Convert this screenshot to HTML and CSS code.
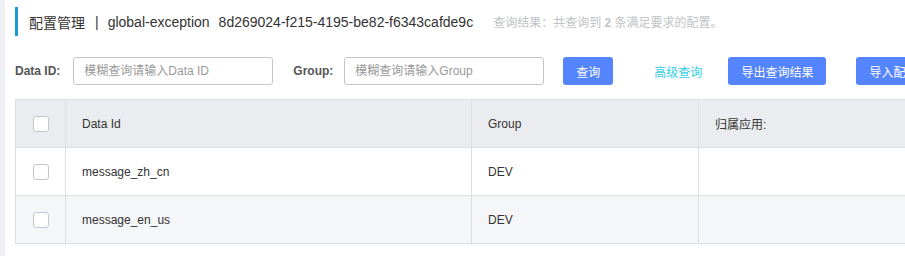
FILE: index.html
```html
<!DOCTYPE html>
<html lang="zh-CN">
<head>
  <meta charset="UTF-8" />
  <meta name="viewport" content="width=device-width, initial-scale=1.0"/>
  <title>配置管理</title>
  <link rel="stylesheet" href="styles.css">
</head>
<body>
  <div class="layout">
    <aside class="rail"></aside>
    <main class="page">
      <div class="page-title">
        <span class="title-main">配置管理</span>
        <span class="title-sep">|</span>
        <span class="title-main">global-exception</span>
        <span class="title-ns">8d269024-f215-4195-be82-f6343cafde9c</span>
        <span class="title-hint">查询结果：共查询到 <b>2</b> 条满足要求的配置。</span>
      </div>

      <form class="search-bar">
        <label class="field-label" for="data-id">Data ID:</label>
        <input class="field-input" id="data-id" type="text" placeholder="模糊查询请输入Data ID">
        <label class="field-label" for="group">Group:</label>
        <input class="field-input" id="group" type="text" placeholder="模糊查询请输入Group">
        <button type="button" class="btn btn-primary btn-query">查询</button>
        <button type="button" class="btn btn-text">高级查询</button>
        <button type="button" class="btn btn-primary">导出查询结果</button>
        <button type="button" class="btn btn-primary">导入配置</button>
      </form>

      <table class="config-table">
        <colgroup>
          <col class="col-check">
          <col class="col-id">
          <col class="col-group">
          <col class="col-app">
        </colgroup>
        <thead>
          <tr>
            <th><span class="checkbox"></span></th>
            <th>Data Id</th>
            <th>Group</th>
            <th>归属应用:</th>
          </tr>
        </thead>
        <tbody>
          <tr>
            <td><span class="checkbox"></span></td>
            <td>message_zh_cn</td>
            <td>DEV</td>
            <td></td>
          </tr>
          <tr class="row-alt">
            <td><span class="checkbox"></span></td>
            <td>message_en_us</td>
            <td>DEV</td>
            <td></td>
          </tr>
        </tbody>
      </table>
    </main>
  </div>
</body>
</html>
```

FILE: styles.css
```css
body {
  margin: 0;
  font-family: "Liberation Sans", "Noto Sans CJK SC", sans-serif;
  color: #333;
  background: #fff;
  overflow: hidden;
}

.layout {
  display: flex;
  min-height: 256px;
  width: 1200px;
}

.rail {
  width: 5px;
  flex: none;
  background: #eef0f4;
}

.page {
  flex: 1;
  padding-left: 10px;
}

/* title */
.page-title {
  display: flex;
  align-items: center;
  height: 29px;
  margin-top: 7px;
  border-left: 3px solid #1b9bd1;
  padding-left: 11px;
  font-size: 14px;
  color: #333;
  white-space: nowrap;
}

.title-sep {
  margin: 0 9px 0 10px;
}

.title-ns {
  margin-left: 9px;
}

.title-hint {
  margin-left: 20px;
  font-size: 12px;
  color: #c0c2c6;
}

.title-hint b {
  font-weight: bold;
}

/* search form */
.search-bar {
  display: flex;
  align-items: center;
  height: 28px;
  margin: 21px 0 0;
  white-space: nowrap;
}

.field-label {
  font-size: 12px;
  font-weight: bold;
  color: #555;
  margin-right: 13px;
}

.field-input {
  box-sizing: border-box;
  width: 200px;
  height: 28px;
  margin: 0 20px 0 0;
  padding: 0 10px;
  border: 1px solid #c4c6cf;
  border-radius: 3px;
  font-family: inherit;
  font-size: 12px;
  color: #333;
  outline: none;
}

#group {
  margin-right: 19px;
}

label[for="group"] {
  margin-right: 11px;
}

.field-input::placeholder {
  color: #999;
}

.btn {
  box-sizing: border-box;
  height: 28px;
  padding: 0 12px;
  border: 1px solid transparent;
  border-radius: 3px;
  font-family: inherit;
  font-size: 12px;
  cursor: pointer;
  flex: none;
}

.btn-primary {
  background: #5584ff;
  color: #fff;
}

.btn-query {
  margin-right: 28px;
}

.btn-text {
  background: transparent;
  color: #33cde5;
  margin-right: 13px;
}

.btn-primary + .btn-primary {
  margin-left: 30px;
}

/* table */
.config-table {
  margin-top: 14px;
  width: 1100px;
  border-collapse: collapse;
  table-layout: fixed;
  font-size: 12px;
}

.col-check { width: 50px; }
.col-id { width: 406px; }
.col-group { width: 227px; }
.col-app { width: 417px; }

.config-table th,
.config-table td {
  height: 47px;
  padding: 0 16px;
  border: 1px solid #dcdee3;
  text-align: left;
  font-weight: normal;
  color: #333;
}

.config-table th:first-child,
.config-table td:first-child {
  padding: 0;
  text-align: center;
}

.config-table thead tr {
  background: #ebecf0;
}

.config-table .row-alt {
  background: #f5f6f8;
}

.checkbox {
  display: inline-block;
  box-sizing: border-box;
  width: 16px;
  height: 16px;
  border: 1px solid #c4c6cf;
  border-radius: 3px;
  background: #fff;
  vertical-align: middle;
}
```
